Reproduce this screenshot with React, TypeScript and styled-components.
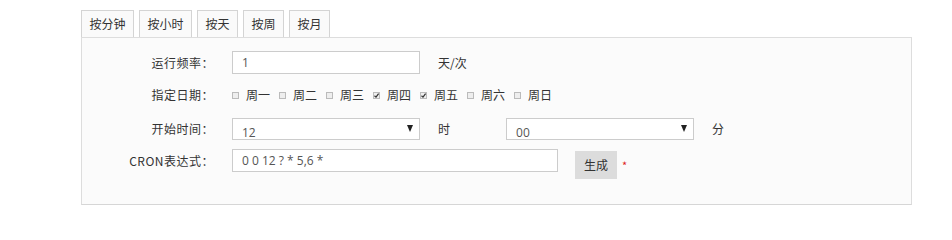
import React from "react";
import styled, { createGlobalStyle } from "styled-components";

const GlobalStyle = createGlobalStyle`
  body {
    margin: 0;
    background: #fff;
    font-family: "Noto Sans CJK SC", "Liberation Sans", sans-serif;
    font-size: 12px;
    color: #333;
  }
`;

const Page = styled.div`
  padding: 10px 0 0 81px;
`;

const TabBar = styled.div`
  display: flex;
  gap: 5px;
`;

const Tab = styled.button`
  height: 27px;
  padding: 0 7.5px;
  border: 1px solid #d4d4d4;
  border-bottom: none;
  background: #fafafa;
  font-family: inherit;
  font-size: 12px;
  line-height: 26px;
  color: #333;
  cursor: pointer;
`;

const Panel = styled.div`
  width: 829px;
  height: 166px;
  border: 1px solid #ddd;
  border-bottom-color: #d6d6d6;
  background: #fbfbfb;
`;

const Row = styled.div<{ $top: number; $height: number }>`
  display: flex;
  align-items: center;
  margin-top: ${(p) => p.$top}px;
  height: ${(p) => p.$height}px;
`;

const Label = styled.div`
  width: 132px;
  margin-right: 18px;
  text-align: right;
  line-height: 16px;
  letter-spacing: 0.5px;
  color: #333;
`;

const TextInput = styled.div<{ $width: number }>`
  width: ${(p) => p.$width}px;
  height: 23px;
  box-sizing: border-box;
  border: 1px solid #ccc;
  background: #fff;
  padding-left: 9px;
  line-height: 21px;
  color: #555;
  font-family: "Open Sans", "Noto Sans CJK SC", sans-serif;
  font-size: 12px;
`;

const Unit = styled.span<{ $left: number }>`
  margin-left: ${(p) => p.$left}px;
  line-height: 16px;
`;

const SelectBox = styled.div<{ $left?: number }>`
  position: relative;
  width: 188px;
  height: 22px;
  margin-left: ${(p) => p.$left ?? 0}px;
  box-sizing: border-box;
  border: 1px solid #ccc;
  background: #fff;
`;

const SelectValue = styled.div`
  height: 18px;
  overflow: hidden;
  padding: 0 0 0 9px;
  font-family: "Open Sans", sans-serif;
  font-size: 12px;
  line-height: 27px;
  color: #555;
`;

const Arrow = styled.span`
  position: absolute;
  right: 6px;
  top: 6px;
  width: 0;
  height: 0;
  border-left: 3.5px solid transparent;
  border-right: 3.5px solid transparent;
  border-top: 7px solid #222;
`;

const DayList = styled.div`
  display: flex;
  gap: 9px;
`;

const Day = styled.label`
  display: flex;
  align-items: center;
  gap: 7px;
  line-height: 16px;
  color: #333;
`;

const Box = styled.span`
  position: relative;
  width: 7px;
  height: 7px;
  border: 1px solid #bbb;
  background: #eee;
  box-sizing: border-box;
`;

const Tick = styled.svg`
  position: absolute;
  left: -1px;
  top: -1px;
`;

const GenButton = styled.button`
  height: 28px;
  margin: 8px 0 0 17px;
  padding: 0 9px;
  border: none;
  background: #dcdcdc;
  font-family: inherit;
  font-size: 12px;
  color: #333;
  cursor: pointer;
`;

const Required = styled.span`
  margin: 8px 0 0 5px;
  color: #d22;
  font-size: 11px;
`;

const tabs = ["按分钟", "按小时", "按天", "按周", "按月"];
const days = [
  { name: "周一", on: false },
  { name: "周二", on: false },
  { name: "周三", on: false },
  { name: "周四", on: true },
  { name: "周五", on: true },
  { name: "周六", on: false },
  { name: "周日", on: false },
];

const Check = ({ on }: { on: boolean }) => (
  <Box>
    {on && (
      <Tick width="7" height="7" viewBox="0 0 7 7">
        <path d="M1.5 3.8 L3 5.2 L5.6 1.6" fill="none" stroke="#333" strokeWidth="1.2" />
      </Tick>
    )}
  </Box>
);

export default function App() {
  return (
    <>
      <GlobalStyle />
      <Page>
        <TabBar>
          {tabs.map((t) => (
            <Tab key={t}>{t}</Tab>
          ))}
        </TabBar>
        <Panel>
          <Row $top={13} $height={23}>
            <Label>运行频率：</Label>
            <TextInput $width={188}>1</TextInput>
            <Unit $left={18}>天/次</Unit>
          </Row>
          <Row $top={12} $height={18}>
            <Label>指定日期：</Label>
            <DayList>
              {days.map((d) => (
                <Day key={d.name}>
                  <Check on={d.on} />
                  {d.name}
                </Day>
              ))}
            </DayList>
          </Row>
          <Row $top={14} $height={22}>
            <Label>开始时间：</Label>
            <SelectBox>
              <SelectValue>12</SelectValue>
              <Arrow />
            </SelectBox>
            <Unit $left={18}>时</Unit>
            <SelectBox $left={56}>
              <SelectValue>00</SelectValue>
              <Arrow />
            </SelectBox>
            <Unit $left={18}>分</Unit>
          </Row>
          <Row $top={9} $height={23}>
            <Label>CRON表达式：</Label>
            <TextInput $width={326}>0 0 12 ? * 5,6 *</TextInput>
            <GenButton>生成</GenButton>
            <Required>*</Required>
          </Row>
        </Panel>
      </Page>
    </>
  );
}
